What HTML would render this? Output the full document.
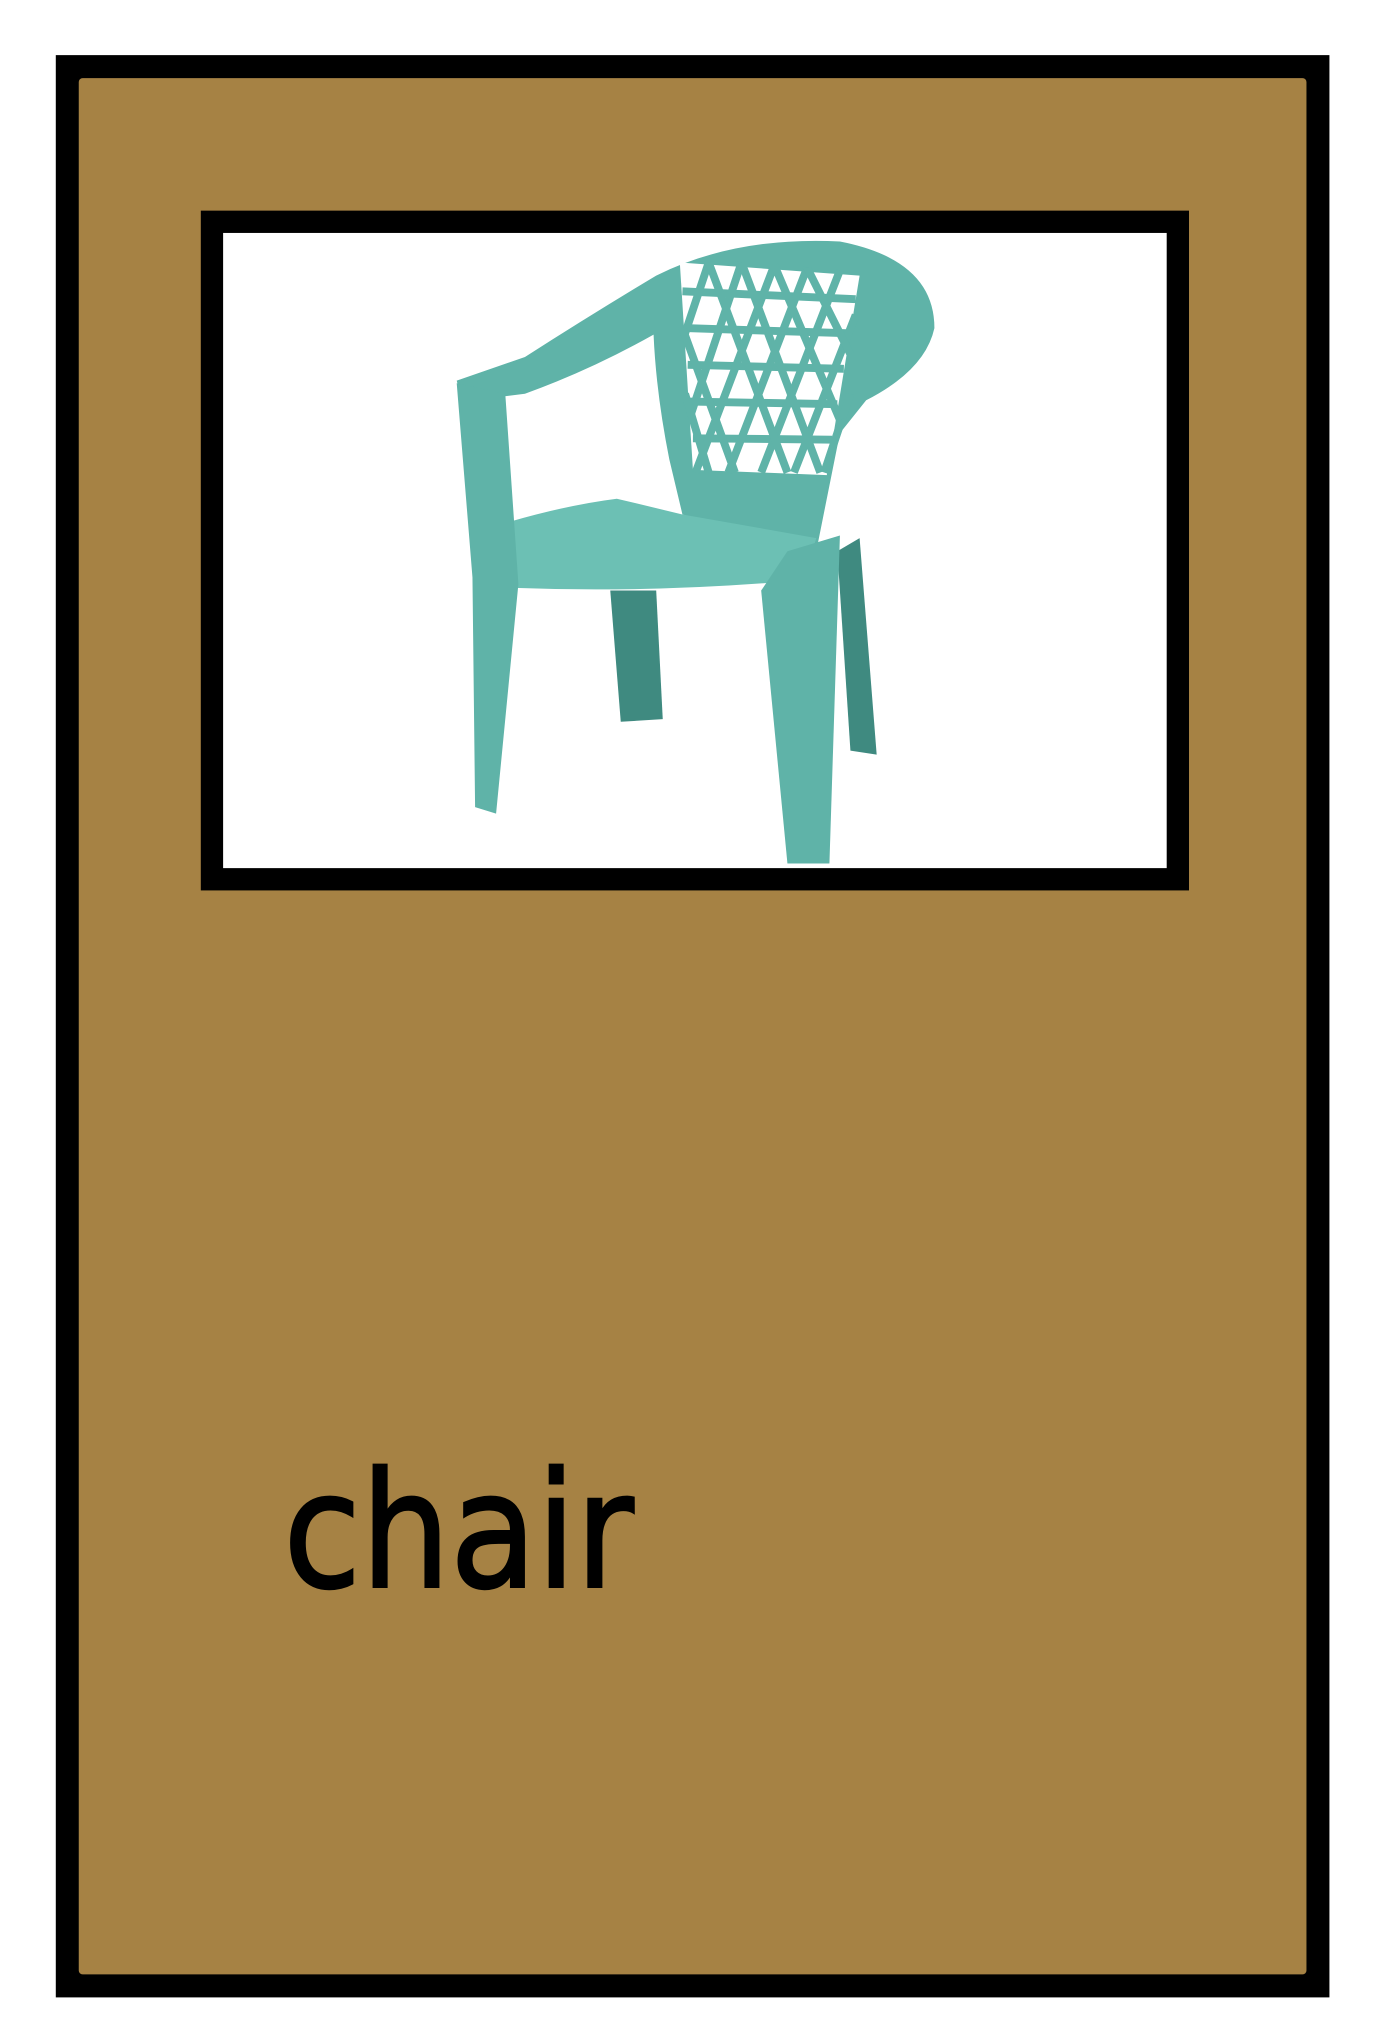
<!DOCTYPE html>
<html><head><meta charset="utf-8"><style>
html,body{margin:0;padding:0;background:#fff;width:1378px;height:2039px;overflow:hidden}
svg{display:block}
</style></head><body>
<svg width="1378" height="2039" viewBox="0 0 1050 1553.7" xmlns="http://www.w3.org/2000/svg">
<rect x="0" y="0" width="1050" height="1553.7" fill="#fff"/>
<rect x="42.5" y="42" width="970.5" height="1480" fill="#000"/>
<rect x="60" y="59.5" width="935.5" height="1445" fill="#A68244" rx="3"/>
<rect x="153" y="160.5" width="753" height="518" fill="#000"/>
<rect x="170" y="177.5" width="719" height="484" fill="#fff"/>
<g>
<path d="M465,450 L500,450 L505,548 L473,550 Z" fill="#3f8a80"/>
<path d="M638,420 L655,410 L668,575 L648,572 Z" fill="#3f8a80"/>
<path d="M348,290 L400,272 Q450,240 500,210 Q560,180 640,184 Q712,198 712,250 Q705,282 660,305 L640,330 L622,420 L520,392 L510,350 Q500,300 498,255 Q450,282 400,300 L352,306 Z" fill="#5fb3a8"/>
<path d="M518,200 L655,210 L630,362 L528,358 Z" fill="#fff"/>
<g stroke="#5fb3a8" stroke-width="6" fill="none">
<path d="M520,222 L652,228 M522,250 L648,254 M524,278 L643,281 M526,306 L638,308 M528,334 L634,335"/>
<path d="M540,200 L520,260 M565,200 L525,320 M590,202 L530,360 M615,204 L555,360 M640,206 L580,360 M652,240 L605,360 M648,300 L628,360"/>
<path d="M540,200 L600,360 M565,200 L625,360 M590,202 L640,320 M615,204 L648,270 M520,250 L560,360 M522,300 L540,360"/>
</g>
<path d="M380,400 Q430,385 470,380 L520,392 L622,410 L612,442 Q500,452 392,448 Z" fill="#6cc0b4"/>
<path d="M348,292 L385,300 L395,445 L378,620 L362,615 L360,440 Z" fill="#5fb3a8"/>
<path d="M600,420 L640,408 L632,658 L600,658 L580,450 Z" fill="#5fb3a8"/>
</g>
<text x="0" y="0" transform="translate(216,1209) scale(0.88,1)" font-family="'DejaVu Sans',sans-serif" font-size="122" fill="#000" stroke="#000" stroke-width="2">chair</text>
</svg>
</body></html>
